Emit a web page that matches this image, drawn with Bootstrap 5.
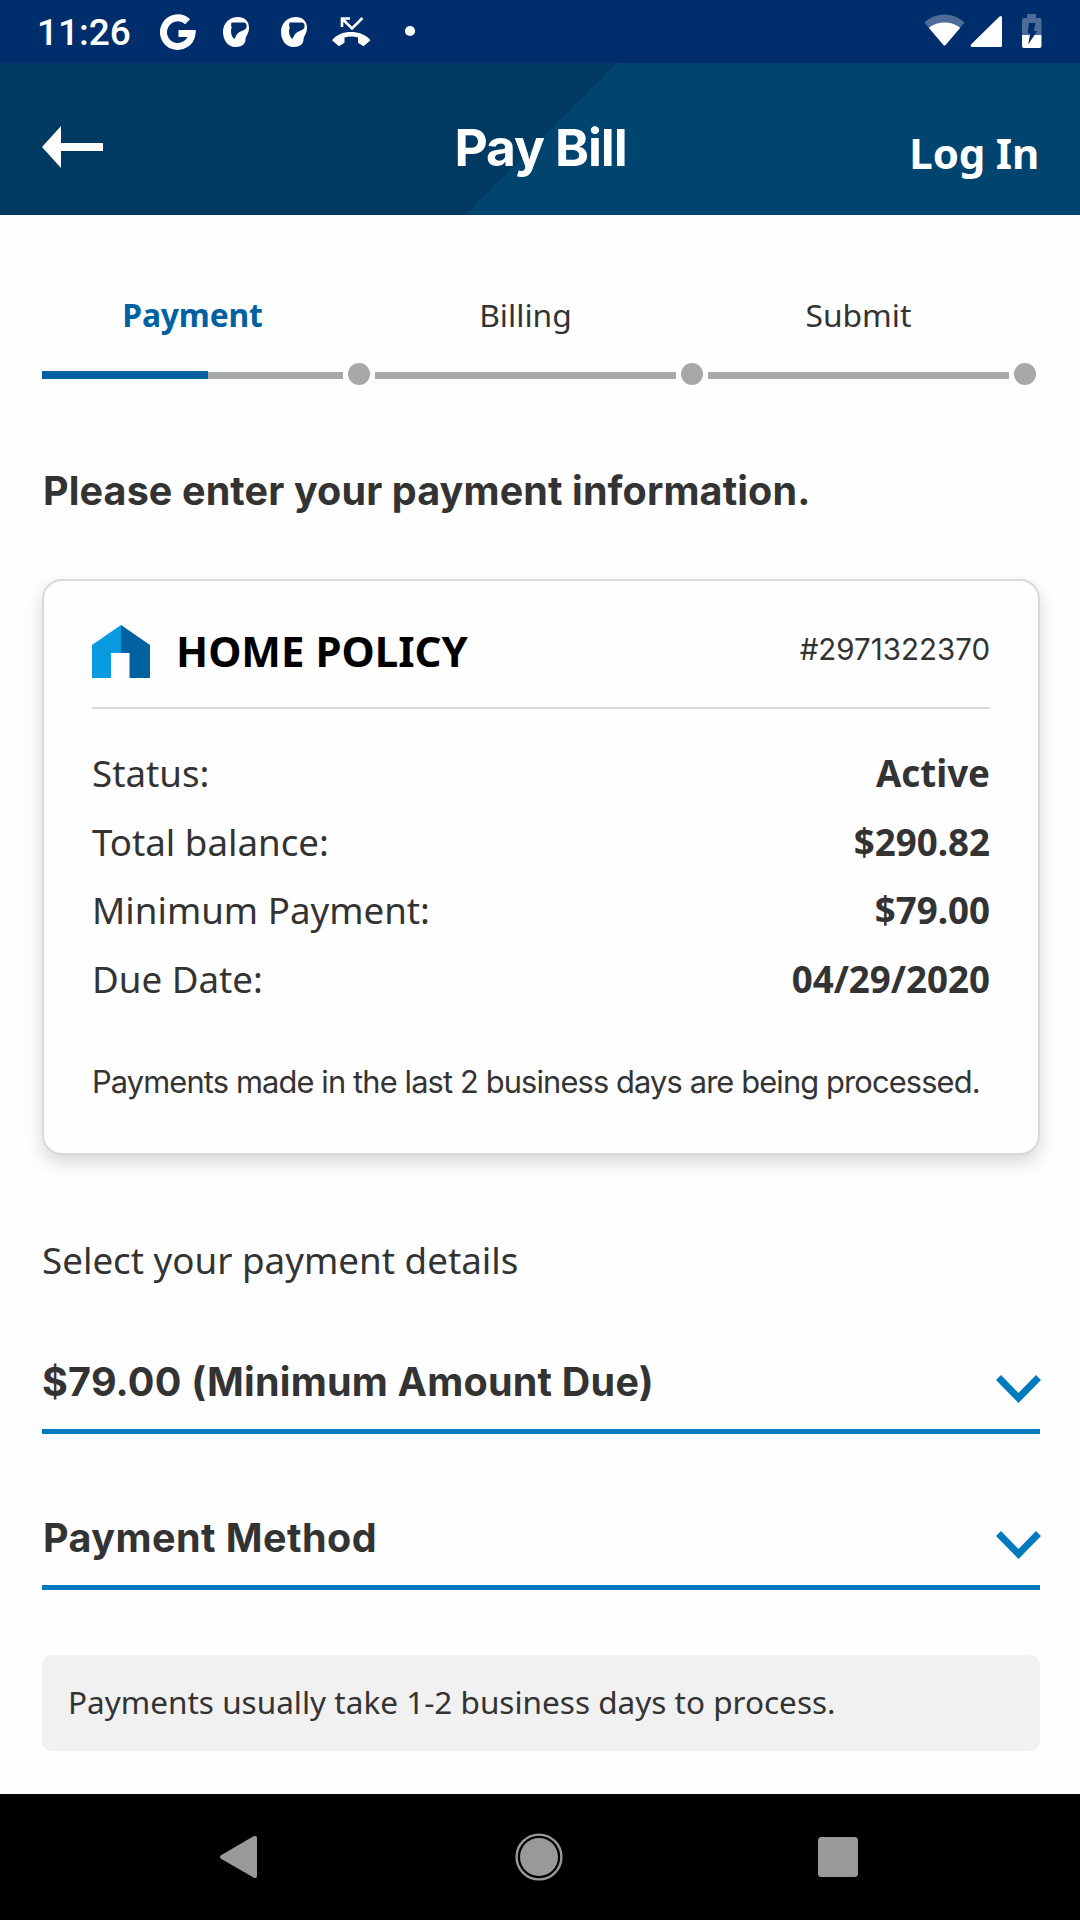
<!DOCTYPE html>
<html lang="en">
<head>
<meta charset="utf-8">
<meta name="viewport" content="width=device-width, initial-scale=1">
<title>Pay Bill</title>
<link href="https://cdn.jsdelivr.net/npm/bootstrap@5.3.0/dist/css/bootstrap.min.css" rel="stylesheet">
<style>
  body { width: 1080px; height: 1920px; overflow: hidden; background: #fefefe; color: #333; font-family: "Noto Sans", sans-serif; }
  svg { display: block; flex: none; }
  .brand-font { font-family: Inter, sans-serif; }
  .status-bar { height: 63px; background: #002e6c; color: #fff; padding: 0 38px 0 37px; }
  .clock { font: 500 37px/63px Roboto, sans-serif; padding-top: 1px; width: 123px; }
  .app-header { height: 152px; background: linear-gradient(135deg, #003a63 0, #003a63 calc(50% + 1px), #00446f calc(50% + 1px)); padding: 0 41px 0 42px; color: #fff; }
  .back-link { width: 166px; padding-top: 15px; }
  .app-title { font-size: 51.5px; font-weight: 700; letter-spacing: -1.1px; line-height: 60px; padding-top: 15px; }
  .login-link { width: 166px; font-size: 42px; font-weight: 700; letter-spacing: -.2px; line-height: 56px; padding-top: 28px; color: #fff; }
  .screen-body { height: 1579px; padding: 78px 40px 0 42px; }
  .step-list { gap: 5px; }
  .step-label { font-size: 31.8px; line-height: 44px; margin-bottom: 26px; width: 301px; }
  .step-active { color: #0061a0; font-weight: 700; letter-spacing: -.15px; }
  .step-track { height: 22px; gap: 5px; }
  .step-line { width: 301px; height: 7px; margin-top: 2px; background: #a6a8aa; }
  .step-fill { width: 166px; height: 8px; margin-top: -1px; background: #0061a0; }
  .step-dot { width: 22px; height: 22px; border-radius: 50%; background: #a6a8aa; }
  .page-heading { font-size: 39.5px; font-weight: 700; letter-spacing: .12px; line-height: 48px; margin: 82px 0 64px; padding-left: 1px; }
  .policy-card { border: 2px solid #d9dad5; border-radius: 20px; padding: 0 48px 52px; background: #fefefe; box-shadow: 0 8px 18px rgba(0,0,0,.15); }
  .policy-head { height: 128px; border-bottom: 2px solid #d9dad5; margin-bottom: 30px; }
  .house-icon { margin-top: 44px; }
  .policy-title { font-size: 42px; font-weight: 700; line-height: 56px; color: #000; padding-top: 13px; margin-left: 26px; }
  .policy-number { font-size: 29.5px; line-height: 40px; padding-top: 9px; }
  .detail-row { height: 68.5px; font-size: 36.7px; line-height: 68.5px; }
  .processing-note { font-size: 30.8px; line-height: 40px; letter-spacing: -.86px; margin: 49px 0 -1px; white-space: nowrap; }
  .select-label { font-size: 36.75px; line-height: 50px; margin: 80px 0 66px; }
  .select-field { height: 83px; border-bottom: 5px solid #007abf; padding-top: 1px; font-size: 39.5px; font-weight: 700; line-height: 60px; letter-spacing: .22px; }
  .select-field svg { margin: 23px -2px 0 0; }
  .method-field { margin-top: 73px; letter-spacing: .45px; padding-left: 1px; }
  .time-note { height: 96px; border-radius: 10px; background: #f1f1f1; margin-top: 65px; padding: 25px 25px 0 26px; font-size: 31.5px; line-height: 44px; }
  .nav-keys { height: 126px; background: #000; padding: 0 222px 0 219px; }
  .home-key { margin-left: 3px; }
</style>
<script src="https://cdn.jsdelivr.net/npm/bootstrap@5.3.0/dist/js/bootstrap.bundle.min.js"></script>
</head>
<body class="d-flex flex-column">
<div class="status-bar d-flex">
  <div class="clock">11:26</div>
  <svg width="260" height="63" viewBox="160 0 260 63" fill="#fff">
    <path d="M187.600 21.800A14.300 14.300 0 1 0 192 33.600H178.500" fill="none" stroke="#fff" stroke-width="7"/>
    <g id="face">
      <path fill-rule="evenodd" d="M238 17c-8 0-15 6-15 14.500 0 9 5 15.500 12.500 15.500 6.500 0 10-3 10-7.500 0-3.500 3.500-5.500 3.500-12C249 21 244 17 238 17zM231.500 22.500h11.500c3 0 4 2 3.500 4.500-.5 3-4 3.500-7 5-3 2-4 4.500-5 7-2.500-2-3.500-4.500-3.500-8 0-2 1.500-3.500 0-5.500z"/>
    </g>
    <use href="#face" x="58"/>
    <path d="M351 32c-7.500 0-14.500 2.600-19 8.200l7 6 5.500-3.500V37.500c4-1.300 9.500-1.300 13.500 0v5.200l5.500 3.500 7-6C366 34.600 358.500 32 351 32z"/>
    <path d="M342 27V18.500H350M342.500 19L352 28.500 362.500 18" fill="none" stroke="#fff" stroke-width="2.600"/>
    <circle cx="410" cy="31" r="5.100"/>
  </svg>
  <svg class="ms-auto" width="120" height="63" viewBox="922 0 120 63" fill="#fff">
    <path d="M924.300 22.500C936 11.700 953 11.700 964.600 22.500L946 44.500Q944.500 46.500 943 44.500z" fill="#4d6d98"/>
    <path d="M928.800 27.800C938 20.800 951 20.800 960.200 27.800L946 44.500Q944.500 46.500 943 44.500z"/>
    <path d="M971 44.500L999.500 16.500Q1002 15 1002 17.500V45.500Q1002 47 1000.500 47H972Q970 47 971 44.500z"/>
    <path d="M1027 14h9v4h3.500q2 0 2 2V35h-19.500V20q0-2 2-2h3z" fill="#4d6d98"/>
    <path d="M1022 35h19.500v11q0 2-2 2h-15.500q-2 0-2-2z"/>
    <path d="M1029 23h6.500l-1.700 8h3.400l-9 13.500 2-11h-2.700z" fill="#002e6c"/>
  </svg>
</div>
<header class="app-header d-flex align-items-center justify-content-between">
  <a class="back-link" href="#" aria-label="Back"><svg width="61" height="42" fill="#fff"><path d="M0 21L19 0v17h42v8H19v17z"/></svg></a>
  <h1 class="app-title brand-font mb-0">Pay Bill</h1>
  <a class="login-link text-end text-decoration-none" href="#">Log In</a>
</header>
<main class="screen-body">
  <div class="step-list d-flex">
    <div>
      <div class="step-label step-active text-center">Payment</div>
      <div class="step-track d-flex align-items-center"><div class="step-line"><div class="step-fill"></div></div><div class="step-dot"></div></div>
    </div>
    <div>
      <div class="step-label text-center">Billing</div>
      <div class="step-track d-flex align-items-center"><div class="step-line"></div><div class="step-dot"></div></div>
    </div>
    <div>
      <div class="step-label text-center">Submit</div>
      <div class="step-track d-flex align-items-center"><div class="step-line"></div><div class="step-dot"></div></div>
    </div>
  </div>
  <h2 class="page-heading brand-font">Please enter your payment information.</h2>
  <section class="policy-card">
    <div class="policy-head d-flex">
      <svg class="house-icon" width="58" height="53"><path d="M0 20L29 0V28H19V53H0z" fill="#089be0"/><path d="M29 0L58 20V53H37.500V28H29z" fill="#0061a0"/></svg>
      <div class="policy-title align-self-center">HOME POLICY</div>
      <div class="policy-number brand-font ms-auto align-self-center">#2971322370</div>
    </div>
    <div class="detail-row d-flex justify-content-between"><span>Status:</span><strong>Active</strong></div>
    <div class="detail-row d-flex justify-content-between"><span>Total balance:</span><strong>$290.82</strong></div>
    <div class="detail-row d-flex justify-content-between"><span>Minimum Payment:</span><strong>$79.00</strong></div>
    <div class="detail-row d-flex justify-content-between"><span>Due Date:</span><strong>04/29/2020</strong></div>
    <p class="processing-note brand-font">Payments made in the last 2 business days are being processed.</p>
  </section>
  <p class="select-label">Select your payment details</p>
  <div class="select-field brand-font d-flex justify-content-between"><span>$79.00 (Minimum Amount Due)</span>
    <svg width="46" height="29"><path d="M2.500 2.500L22.500 23L42.500 2.500" fill="none" stroke="#007abf" stroke-width="7"/></svg></div>
  <div class="select-field method-field brand-font d-flex justify-content-between"><span>Payment Method</span>
    <svg width="46" height="29"><path d="M2.500 2.500L22.500 23L42.500 2.500" fill="none" stroke="#007abf" stroke-width="7"/></svg></div>
  <div class="time-note">Payments usually take 1-2 business days to process.</div>
</main>
<nav class="nav-keys d-flex align-items-center justify-content-between">
  <svg width="38" height="44" fill="#999"><path d="M2 20.300L34.500 1.300Q38 0 38 3V41Q38 44 34.500 42.500L2 23.700Q0 22 2 20.300z"/></svg>
  <svg class="home-key" width="48" height="48"><circle cx="24" cy="24" r="22.400" fill="none" stroke="#999" stroke-width="2.400"/><circle cx="24" cy="24" r="19" fill="#999"/></svg>
  <svg width="40" height="40"><rect width="40" height="40" rx="3.500" fill="#999"/></svg>
</nav>
</body>
</html>
